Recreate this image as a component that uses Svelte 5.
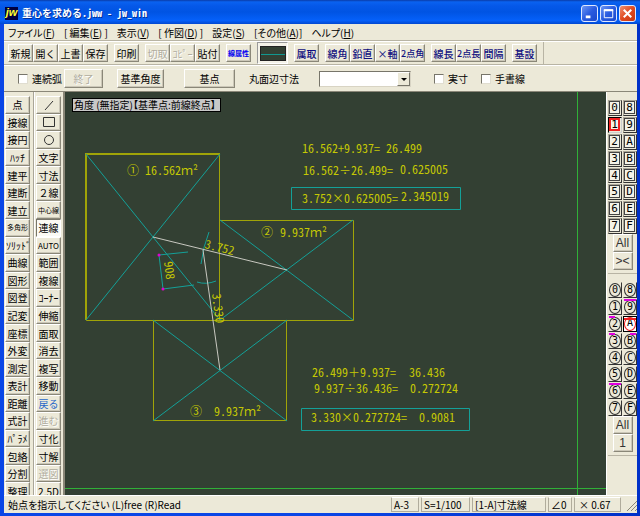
<script>
  const menus = [
    ['ファイル', 'F', '', ''],
    ['編集', 'E', '[ ', ' ]'],
    ['表示', 'V', '', ''],
    ['作図', 'D', '[ ', ' ]'],
    ['設定', 'S', '', ''],
    ['その他', 'A', '[', ']'],
    ['ヘルプ', 'H', '', '']
  ];

  const fileGroups = [
    [{ t: '新規' }, { t: '開く' }, { t: '上書' }, { t: '保存' }],
    [{ t: '印刷' }],
    [{ t: '切取', off: true }, { t: 'ｺﾋﾟｰ', off: true }, { t: '貼付' }]
  ];
  const measureGroups = [
    ['属取'],
    ['線角', '鉛直', '×軸', '2点角'],
    ['線長', '2点長', '間隔'],
    ['基設']
  ];

  const leftTools = ['点', '接線', '接円', 'ﾊｯﾁ', '建平', '建断', '建立', '多角形', 'ｿﾘｯﾄﾞ', '曲線', '図形', '図登', '記変', '座標', '外変', '測定', '表計', '距離', '式計', 'ﾊﾟﾗﾒ', '包絡', '分割', '整理'];
  const rightTools = ['line', 'rect', 'circle', '文字', '寸法', '２線', '中心線', '連線', 'AUTO', '範囲', '複線', 'ｺｰﾅｰ', '伸縮', '面取', '消去', '複写', '移動', '戻る', '進む', '寸化', '寸解', '選図', '2.5D'];
  const disabledTools = ['進む', '選図'];
  const shapeNames = { line: '線', rect: '矩形', circle: '円' };

  const ids = ['0', '8', '1', '9', '2', 'A', '3', 'B', '4', 'C', '5', 'D', '6', 'E', '7', 'F'];
  const marks = { 9: 'full', 2: 'left', 3: 'left', B: 'right', 6: 'full', A: 'red' };

  const notes = [
    [302, 153, '16.562+9.937='],
    [386, 153, '26.499'],
    [303, 175, '16.562÷26.499='],
    [400, 174, '0.625005'],
    [302, 203, '3.752×0.625005='],
    [401, 201, '2.345019'],
    [312, 377, '26.499＋9.937='],
    [409, 377, '36.436'],
    [314, 393, '9.937÷36.436='],
    [410, 393, '0.272724'],
    [311, 422, '3.330×0.272724='],
    [419, 422, '0.9081'],
    [127, 175, '① 16.562ｍ²'],
    [261, 237, '②'],
    [280, 237, '9.937ｍ²'],
    [190, 416, '③'],
    [214, 416, '9.937ｍ²']
  ];
  // Full-width signs are set apart so that only the digits take half-width forms.
  const pieces = (text) => text.split(/([＋ｍ²]+)/).filter(Boolean);
  const isWide = (piece) => /^[＋ｍ²]/.test(piece);

  let linked = $state(false);
  let actual = $state(false);
  let freehand = $state(false);
  let layer = $state('1');
  let group = $state('A');
  let tool = $state('連線');
</script>

<div class="window">
  <header class="title">
    <span class="logo">jw</span>
    <h1>重心を求める.jww － jw_win</h1>
    <button class="cap" aria-label="最小化"><svg viewBox="0 0 16 16"><path d="M4 11.5h5" stroke-width="3" /></svg></button>
    <button class="cap" aria-label="最大化"><svg viewBox="0 0 16 16"><path d="M3.5 4h9v8.500h-9z" /><path d="M3 4.500h10" stroke-width="2" /></svg></button>
    <button class="cap close" aria-label="閉じる"><svg viewBox="0 0 16 16"><path d="M4 4l8 8M12 4l-8 8" stroke-width="2.200" /></svg></button>
  </header>

  <nav class="menu">
    {#each menus as [name, key, before, after]}
      <button>{before}{name}(<u>{key}</u>){after}</button>
    {/each}
  </nav>

  <div class="toolbar">
    {#each fileGroups as items}
      <div class="group">
        {#each items as item}
          <button class="tool" disabled={item.off}>{item.t}</button>
        {/each}
      </div>
    {/each}
    <button class="tool attr">線属性</button>
    <button class="swatch" aria-label="線色"><span></span></button>
    {#each measureGroups as items}
      <div class="group navy">
        {#each items as item}
          <button class="tool" class:tight={item.length > 2}>{item}</button>
        {/each}
      </div>
    {/each}
    <div class="end"></div>
  </div>

  <div class="options">
    <label class="check"><input type="checkbox" bind:checked={linked} />連続弧</label>
    <button class="tool finish" disabled>終了</button>
    <button class="tool angle">基準角度</button>
    <button class="tool base">基点</button>
    <label class="size" for="size">丸面辺寸法</label>
    <div class="combo">
      <select id="size"><option value=""></option></select>
      <span class="arrow"></span>
    </div>
    <label class="check"><input type="checkbox" bind:checked={actual} />実寸</label>
    <label class="check last"><input type="checkbox" bind:checked={freehand} />手書線</label>
  </div>

  <main>
    <div class="palette">
      <div class="rows">
        {#each leftTools as name}
          <button class="tool" class:small={name === '多角形'}>{name}</button>
        {/each}
      </div>
    </div>
    <div class="palette">
      <div class="rows">
        {#each rightTools as name}
          <button
            class="tool"
            class:small={name === '中心線'}
            class:latin={name === 'AUTO'}
            class:pressed={tool === name}
            class:back={name === '戻る'}
            disabled={disabledTools.includes(name)}
            aria-label={shapeNames[name] ?? name}
            onclick={() => (tool = name)}
          >
            {#if name === 'line'}
              <svg viewBox="0 0 14 12"><path d="M3 11L11 2" /></svg>
            {:else if name === 'rect'}
              <svg viewBox="0 0 14 12"><path d="M1.500 1.500h11v9h-11z" /></svg>
            {:else if name === 'circle'}
              <svg viewBox="0 0 14 12"><circle cx="7" cy="6" r="4.500" /></svg>
            {:else}{name}{/if}
          </button>
        {/each}
      </div>
    </div>

    <svg class="canvas" viewBox="65 92 541 403" preserveAspectRatio="xMinYMin slice">
      <g class="green"><path d="M577.500 92V496M65 488.500H606" /></g>
      <g class="yellow">
        <path d="M86.500 154.500H219.500V320.500H86.500zM219.500 220.500H353.500V320.500H219.500zM153.500 320.500H286.500V420.500H153.500z" />
        <path d="M86 320V154H220" stroke-width="2" />
      </g>
      <g class="cyan">
        <path d="M86 154L220 320M220 154L86 320M220 220L353 320M353 220L220 320M153 320L287 421M287 320L153 421" />
        <path d="M188 252L159 255L163 289L194 285" />
        <path d="M209 232Q203 247 201 264M197 282Q206 285 216 281" />
        <path d="M291.500 187.500h169v22h-169zM301.500 408.500h168v22h-168z" />
      </g>
      <g class="white"><path d="M153 237L287 270M203 250L220 370" /></g>
      <g class="magenta"><circle cx="159" cy="255" r="1.500" /><circle cx="163" cy="289" r="1.500" /></g>
      {#each notes as [x, y, text]}
        <text {x} {y}>{#each pieces(text) as piece}<tspan class:wide={isWide(piece)}>{piece}</tspan>{/each}</text>
      {/each}
      <text transform="translate(204 248) rotate(14)">3.752</text>
      <text transform="translate(212 294) rotate(83)">3.330</text>
      <text transform="translate(164 262) rotate(83)">908</text>
      <rect class="tagbox" x="72.500" y="98.500" width="148" height="13" />
      <text class="tag" x="74" y="109">角度 (無指定)【基準点:前線終点】</text>
    </svg>

    <aside>
      <div class="layers">
        <div class="cells">
          {#each ids as id}
            <button class="layer" class:current={layer === id} onclick={() => (layer = id)}><span>{id}</span></button>
          {/each}
        </div>
        <button class="tool all">All</button>
        <button class="tool all">&gt;&lt;</button>
      </div>
      <div class="layers">
        <div class="cells">
          {#each ids as id}
            <button class="layer round {marks[id] ?? ''}" class:current={group === id} onclick={() => (group = id)}><span>{id}</span></button>
          {/each}
        </div>
        <button class="tool all">All</button>
        <button class="tool all">1</button>
      </div>
    </aside>
  </main>

  <footer>
    <p>始点を指示してください (L)free (R)Read</p>
    <button class="cell paper">A-3</button>
    <button class="cell scale">S=1/100</button>
    <button class="cell line">[1-A]寸法線</button>
    <button class="cell tilt">∠0</button>
    <button class="cell zoom">× 0.67</button>
    <svg class="grip" viewBox="0 0 12 12"><path d="M2 12L12 2M6 12L12 6M10 12L12 10" /></svg>
  </footer>
</div>

<style>
  :global(body) { margin: 0; }
  .window, .window * { box-sizing: border-box; }
  .window {
    display: flex;
    flex-direction: column;
    height: 100vh;
    padding: 0 3px 3px 4px;
    background: linear-gradient(90deg, #0a46e6, #0a46e6 50%, #0030c8);
    color: #000;
    font: 10px/12px "Noto Sans CJK JP", "Liberation Sans", sans-serif;
    overflow: hidden;
  }
  button, select, input { font: inherit; color: inherit; margin: 0; padding: 0; }
  button { white-space: nowrap; overflow: hidden; }

  .title {
    display: flex;
    align-items: center;
    gap: 2px;
    flex: none;
    height: 24px;
    margin: 0 -3px 0 -4px;
    padding: 2px 4px 0 5px;
    background: linear-gradient(#0a3ca8, #0a62f0 8%, #0558e8 25%, #0054e3 50%, #0560fa 85%, #0148d0);
  }
  .logo {
    width: 13px;
    height: 13px;
    background: #000040;
    color: #ffff30;
    font: italic bold 11px/11px "Liberation Sans", sans-serif;
    text-align: center;
  }
  h1 {
    flex: 1;
    margin: 0 0 0 2px;
    color: #fff;
    font-size: 10px;
    line-height: 14px;
    font-weight: 700;
    font-feature-settings: "hwid";
    text-shadow: 1px 1px 0 #003098;
  }
  .cap {
    width: 17px;
    height: 17px;
    border: 1px solid #dfe8ff;
    border-radius: 3px;
    background: linear-gradient(135deg, #6c96f4, #2a5be0 50%, #1a48cc);
  }
  .close { background: linear-gradient(135deg, #f09070, #e04a20 50%, #c83610); }
  .cap svg { display: block; width: 15px; height: 15px; }
  .cap path { fill: none; stroke: #fff; }

  .menu {
    display: flex;
    gap: 9px;
    flex: none;
    height: 17px;
    padding: 0 4px;
    background: #ece9d8;
    border-bottom: 1px solid #b8b4a4;
  }
  .menu button { border: 0; background: none; white-space: pre; line-height: 15px; font-feature-settings: "palt"; }

  .toolbar {
    display: flex;
    align-items: center;
    gap: 6px;
    flex: none;
    height: 24px;
    padding-left: 4px;
    background: #ece9d8;
    border-top: 1px solid #fff;
    border-bottom: 1px solid #b8b4a4;
  }
  .group { display: flex; }
  .tool {
    border: 1px solid;
    border-color: #fff #8a8778 #8a8778 #fff;
    background: #ece9d8;
    box-shadow: inset -1px -1px 0 #cbc7b8;
    text-align: center;
  }
  .tool:disabled { color: #b0ad9f; text-shadow: 1px 1px 0 #fff; }
  .toolbar .tool { width: 25px; height: 18px; line-height: 15px; }
  .toolbar .tight { font-size: 9px; }
  .toolbar .attr { color: #0000f0; font-size: 7px; font-weight: 700; }
  .navy { color: #101080; font-weight: 500; }
  .swatch {
    display: flex;
    width: 31px;
    height: 22px;
    padding: 3px 1px 2px 2px;
    border: 1px solid;
    border-color: #999 #fff #fff #999;
    background: #f4f2e8;
  }
  .swatch span {
    flex: 1;
    background: linear-gradient(#334033 7px, #109890 7px, #109890 8px, #334033 8px);
    border: 1px solid #222;
  }
  .end { width: 1px; height: 22px; background: #b8b4a4; }

  .options {
    display: flex;
    align-items: center;
    flex: none;
    height: 27px;
    padding-left: 14px;
    background: #ece9d8;
    border-top: 1px solid #fff;
    border-bottom: 1px solid #8a8778;
  }
  .options .tool { height: 19px; }
  .check { display: flex; align-items: center; gap: 4px; }
  .check input {
    appearance: none;
    width: 10px;
    height: 10px;
    background: #fff;
    border: 1px solid;
    border-color: #77756a #e0ddd0 #e0ddd0 #77756a;
  }
  .check input:checked { background: #333; }
  .check.last { margin-left: 13px; }
  .finish { width: 39px; margin-left: 2px; }
  .angle { width: 47px; margin-left: 14px; }
  .base { width: 51px; margin-left: 20px; }
  .size { margin-left: 14px; }
  .combo { position: relative; width: 92px; margin: 0 23px 0 20px; }
  select {
    appearance: none;
    display: block;
    width: 100%;
    height: 16px;
    background: #fff;
    border: 1px solid;
    border-color: #77756a #d8d4c4 #d8d4c4 #77756a;
    border-radius: 0;
  }
  .arrow {
    position: absolute;
    top: 1px;
    right: 1px;
    width: 13px;
    height: 14px;
    background: #ece9d8;
    border: 1px solid;
    border-color: #fff #77756a #77756a #fff;
    pointer-events: none;
  }
  .arrow::after {
    content: "";
    position: absolute;
    left: 3px;
    top: 5px;
    border: 3px solid transparent;
    border-top-color: #000;
    border-bottom: 0;
  }

  main { display: flex; flex: 1; min-height: 0; background: #ece9d8; overflow: hidden; }
  .palette { flex: none; width: 30px; padding: 4px 3px 0 1px; border-right: 1px solid #aaa698; }
  .palette + .palette { width: 31px; padding: 4px 2px 0 1px; border-left: 1px solid #fff; border-right: 2px solid #8a8778; }
  .rows { display: grid; grid-template-rows: repeat(23, 1fr); height: calc(100% + 5px); }
  .palette .tool { min-height: 0; line-height: 13px; }
  .palette .small { font-size: 7px; }
  .palette .latin { font-size: 8px; }
  .palette .pressed { background: #fbfaf4; border-color: #77756a #fff #fff #77756a; box-shadow: none; }
  .palette .back { color: #2868c8; }
  .palette svg { display: block; width: 14px; height: 12px; margin: 0 auto; }
  .palette path, .palette circle { fill: none; stroke: #333; }

  .canvas { flex: 1; min-width: 0; height: 100%; background: #334033; }
  .canvas path { fill: none; }
  .green { stroke: #30b038; }
  .cyan { stroke: #14a098; }
  .yellow { stroke: #a0a408; }
  .white { stroke: #c8c8c0; }
  .magenta { fill: #e000d0; }
  .canvas text { fill: #c4c804; font-size: 12px; font-feature-settings: "hwid"; white-space: pre; }
  .canvas .wide { font-feature-settings: normal; }
  .tagbox { fill: #c8c8c8; stroke: #000; }
  .canvas .tag { fill: #000; font-size: 10px; font-feature-settings: "palt"; }

  aside { flex: none; width: 31px; padding: 0 0 0 1px; border-left: 1px solid #fff; }
  .layers {
    display: flex;
    flex-direction: column;
    align-items: center;
    height: 182px;
    padding-top: 8px;
    border-bottom: 1px solid #b8b4a4;
  }
  .cells { display: grid; grid-template: repeat(8, 1fr) / 1fr 1fr; width: 100%; height: 134px; gap: 1px; }
  .layer {
    display: flex;
    min-height: 0;
    padding: 0 1px 1px 0;
    border: 1px solid;
    border-color: #aaa698 #333 #333 #aaa698;
    background: #ece9d8;
  }
  .layer span {
    flex: 1;
    height: 100%;
    border: 1px solid #444;
    background: #f4f3e8;
    font: 11px/12px "DejaVu Sans Mono", monospace;
    text-align: center;
  }
  .layer.current { border-color: #000 #ccc #ccc #000; }
  .layer.current span { border: 2px solid #f02020; line-height: 10px; }
  .layer.round { position: relative; overflow: visible; padding: 0; border-color: transparent #333 #333 transparent; }
  .layer.round span { border: 1px solid #333; border-radius: 50%; font-size: 10px; background: none; }
  .layer.round.current { border-color: #000; background: #fff; }
  .layer.round.current span { border: 1px solid #f02020; }
  .full::before, .left::before, .right::before, .red::before {
    content: "";
    position: absolute;
    top: -1px;
    left: 0;
    right: 0;
    height: 2px;
    background: #e000e0;
  }
  .left::before { right: 6px; }
  .right::before { left: 6px; }
  .red::before { background: #f02020; top: 1px; }
  .all { width: 20px; height: 18px; font: 12px/15px "Liberation Sans", sans-serif; color: #333; }

  footer {
    display: flex;
    align-items: center;
    flex: none;
    height: 18px;
    background: #ece9d8;
    border-top: 1px solid #fff;
    font-feature-settings: "palt";
  }
  p { flex: 1; margin: 0; padding-left: 4px; white-space: nowrap; }
  .cell {
    height: 15px;
    margin-right: 2px;
    padding-left: 2px;
    border: 1px solid;
    border-color: #fff #b0ac9c #b0ac9c #fff;
    border-left-color: #b0ac9c;
    background: none;
    text-align: left;
    line-height: 12px;
    font-feature-settings: "palt";
  }
  .paper { width: 28px; }
  .scale { width: 49px; }
  .line { width: 74px; }
  .tilt { width: 24px; }
  .zoom { width: 47px; padding-left: 4px; }
  .grip { width: 12px; height: 12px; margin-left: 2px; }
  .grip path { stroke: #8a8778; fill: none; }
</style>
